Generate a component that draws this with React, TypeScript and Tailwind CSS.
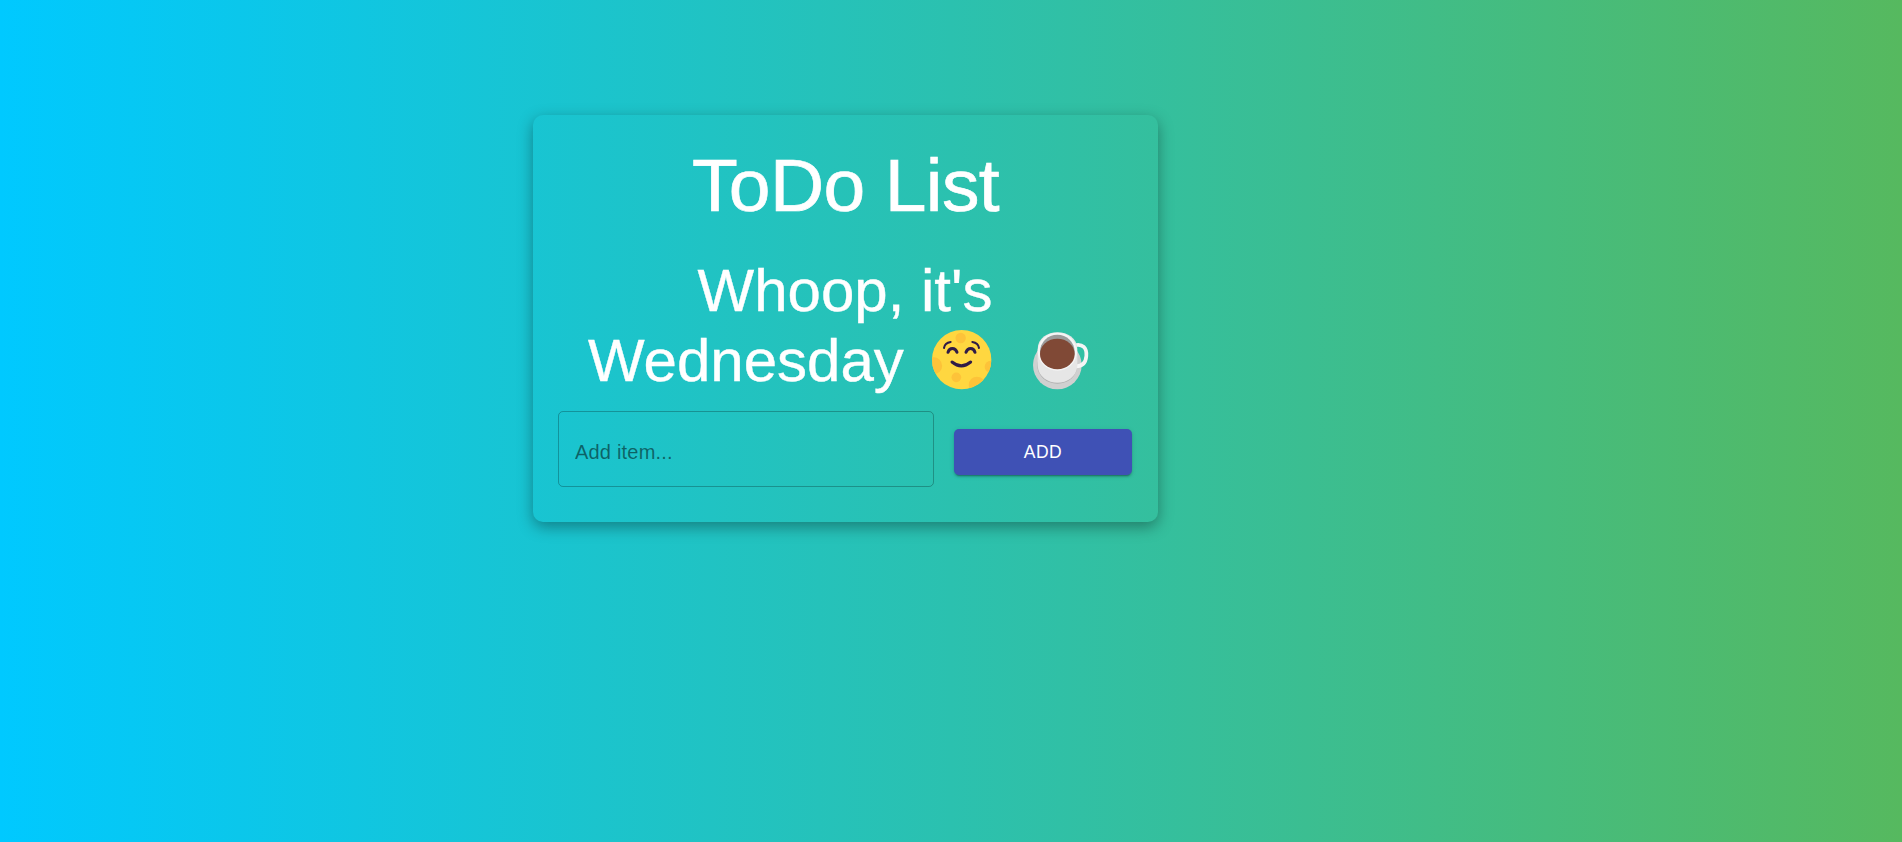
function SmilingMoon() {
  return (
    <svg className="h-[60px] w-[60px] shrink-0" viewBox="36 30 180 180" aria-hidden="true">
      <defs>
        <clipPath id="moon">
          <circle cx="125" cy="119" r="89" />
        </clipPath>
      </defs>
      <circle cx="125" cy="119" r="89" fill="#ffd740" />
      <g clipPath="url(#moon)" fill="#fdc339">
        <circle cx="122" cy="54" r="15.500" />
        <circle cx="41" cy="137" r="25.500" />
        <circle cx="109" cy="172" r="14.500" />
        <circle cx="171" cy="195" r="25" />
        <circle cx="212" cy="140" r="18" />
      </g>
      <g fill="none" stroke="#2f1b47" strokeLinecap="round">
        <path d="M72 84 Q74 69 92 66" strokeWidth="6" />
        <path d="M177 84 Q175 69 157 66" strokeWidth="6" />
        <path d="M84 97 C88 82 106 82 111 97" strokeWidth="9" />
        <path d="M138 97 C143 82 161 82 165 97" strokeWidth="9" />
        <path d="M96 126 Q124 149 152 126" strokeWidth="9" />
      </g>
    </svg>
  );
}

function CoffeeCup() {
  return (
    <svg className="h-[58px] w-[56px] shrink-0" viewBox="39 36 168 174" aria-hidden="true">
      <circle cx="112" cy="135" r="73" fill="#d0d0d0" />
      <ellipse cx="112" cy="137" rx="60" ry="54" fill="#b0b0b0" />
      <path d="M164 76 C188 70 201 84 199 108 C197 130 185 139 168 139" fill="none" stroke="#f5f5f5" strokeWidth="11" />
      <path d="M53 88 C53 20 172 20 172 88 V137 C168 205 57 205 53 137 Z" fill="#e6e6e6" />
      <ellipse cx="112" cy="95" rx="59" ry="57" fill="#f5f5f5" />
      <ellipse cx="112" cy="95" rx="52" ry="51" fill="#9b9b9b" />
      <ellipse cx="112" cy="102" rx="52" ry="46" fill="#804936" />
    </svg>
  );
}

export default function App() {
  return (
    <main className="flex min-h-screen items-start bg-[linear-gradient(90deg,#00c9ff_0%,#56b95f_100%)] pt-[115px] pl-[533px] font-['Liberation_Sans',Arial,sans-serif]">
      <section className="h-[407px] w-[625px] rounded-[10px] px-[25px] pt-[25px] shadow-[0_5px_15px_rgba(0,0,0,0.35)]">
        <h1 className="text-center text-[75px] leading-[90px] tracking-[-0.00833em] text-white [-webkit-text-stroke:0.7px_white]">ToDo List</h1>
        <h2 className="mt-[25px] text-[60px] leading-[70px] text-white [-webkit-text-stroke:0.4px_white]">
          <span className="block pt-px pr-px text-center">Whoop, it's</span>
          <span className="flex h-[70px] items-start pl-[30px]">
            <span className="w-[344px] whitespace-nowrap">Wednesday</span>
            <span className="flex items-start gap-[41px] pt-1">
              <SmilingMoon />
              <span className="flex pt-[2px]">
                <CoffeeCup />
              </span>
            </span>
          </span>
        </h2>
        <form className="mt-[15px] flex items-center gap-5" onSubmit={(e) => e.preventDefault()}>
          <input
            className="h-[76px] w-[376px] rounded-[5px] border border-black/25 bg-transparent px-4 pt-[7px] text-[20px] tracking-[0.01em] text-black/85 outline-none placeholder:text-black/50"
            placeholder="Add item..."
          />
          <button className="mt-[6px] h-[46px] w-[178px] rounded-[5px] bg-[#3f51b5] text-[17.5px] tracking-[0.02857em] text-white shadow-[0_3px_1px_-2px_rgba(0,0,0,0.2),0_2px_2px_0_rgba(0,0,0,0.14),0_1px_5px_0_rgba(0,0,0,0.12)]">
            ADD
          </button>
        </form>
      </section>
    </main>
  );
}
